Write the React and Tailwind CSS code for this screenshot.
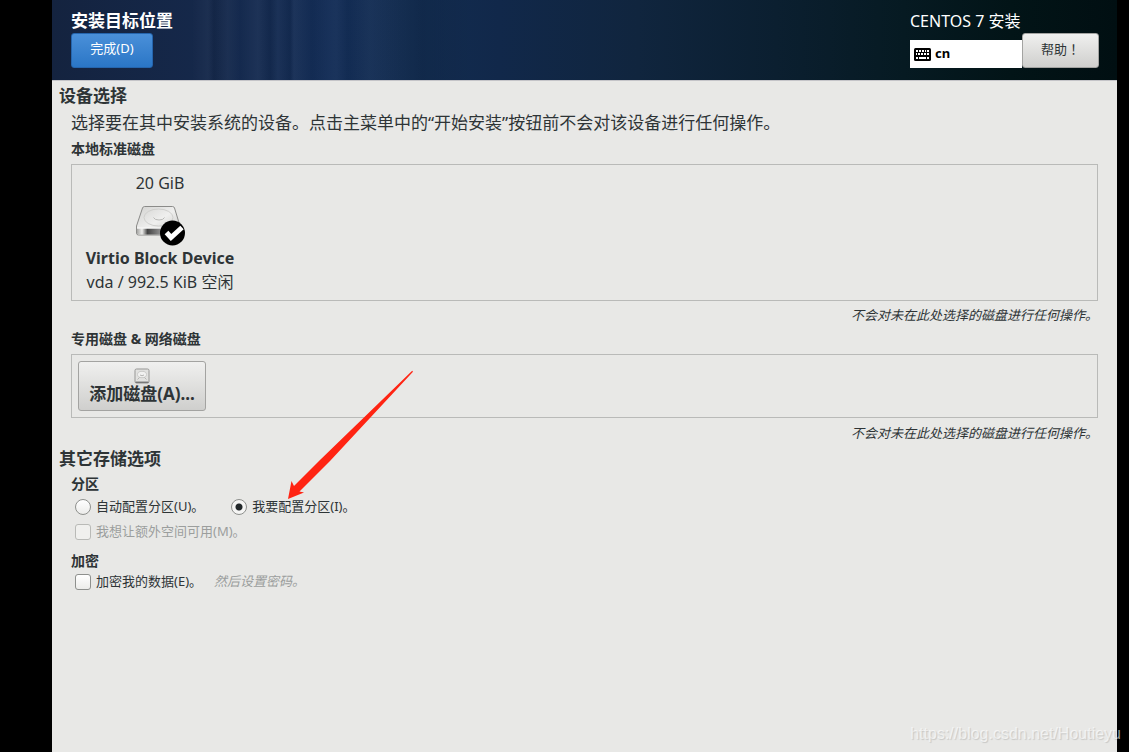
import { useState } from "react";

function KeyboardIcon() {
  return (
    <svg className="w-[17px] h-[13px] shrink-0" viewBox="0 0 17 13" aria-hidden="true">
      <rect x="0" y="0" width="17" height="13" rx="1.5" fill="#000" />
      <g fill="#fff">
        <path d="M2 2h2v2H2zM5 2h2v2H5zM8 2h2v2H8zM11 2h1v2h-1zM13 2h2v2h-2z" />
        <path d="M2 5h1v2H2zM4 5h2v2H4zM7 5h2v2H7zM10 5h2v2h-2zM13 5h2v2h-2z" />
        <path d="M2 9h2v2H2zM5 9h7v2H5zM13 9h2v2h-2z" />
      </g>
    </svg>
  );
}

function DiskIcon() {
  return (
    <svg className="w-[50px] h-[42px]" viewBox="0 0 50 42" aria-hidden="true">
      <defs>
        <linearGradient id="diskTop" x1="0" y1="0" x2="1" y2="1">
          <stop offset="0" stopColor="#d2d2d0" />
          <stop offset="0.5" stopColor="#efefee" />
          <stop offset="1" stopColor="#c4c4c2" />
        </linearGradient>
        <linearGradient id="diskFront" x1="0" y1="0" x2="1" y2="0">
          <stop offset="0" stopColor="#a5a5a3" />
          <stop offset="0.12" stopColor="#eeeeec" />
          <stop offset="0.25" stopColor="#444" />
          <stop offset="0.6" stopColor="#999" />
          <stop offset="1" stopColor="#ddd" />
        </linearGradient>
      </defs>
      <path d="M9.500 2.500h28q1.500 0 2 1.500l5.500 18v7q0 2-2 2h-39.500q-2 0-2-2v-7l6-18q.6-1.500 2-1.500z" fill="url(#diskTop)" stroke="#8b8b89" />
      <path d="M2 24.500h42v4.500q0 1.500-1.500 1.500h-39q-1.500 0-1.500-1.500z" fill="url(#diskFront)" />
      <path d="M2 24h42" stroke="#fafafa" />
      <ellipse cx="23.500" cy="13.500" rx="14.500" ry="8.500" fill="none" stroke="#cfcfcd" />
      <path d="M18.500 13.500q1 2.500 5.500 2.500t5.500-2.500" fill="none" stroke="#b8b8b6" />
      <circle cx="37.500" cy="29" r="12.500" fill="#000" />
      <path d="M31.500 28.500l4.500 5 11-10" fill="none" stroke="#fff" strokeWidth="5" />
    </svg>
  );
}

function SmallDiskIcon() {
  return (
    <svg className="w-4 h-4" viewBox="0 0 16 16" aria-hidden="true">
      <rect x="1" y="1" width="14" height="14" rx="1.500" fill="#e2e2e0" stroke="#979795" />
      <path d="M1.500 14.300h13" stroke="#777" strokeWidth="1.500" />
      <ellipse cx="8" cy="6.500" rx="4.500" ry="3.200" fill="#f1f1f0" stroke="#cacac8" />
      <path d="M6 7q2 1.500 4 0M3.500 11.500l2-2M12.500 11.500l-2-2" stroke="#b5b5b3" fill="none" />
    </svg>
  );
}

function Arrow() {
  return (
    <svg className="absolute left-[286px] top-[370px] w-[130px] h-[131px] pointer-events-none" viewBox="0 0 130 131" aria-hidden="true">
      <path d="M2 129L5.500 111L8 116L34 90L126.200 .8L127 1.800L44 91L13.500 121.500L18 122.500Z" fill="#ff2413" />
    </svg>
  );
}

const radioClass =
  "appearance-none w-4 h-4 shrink-0 rounded-full border border-[#8e908d] bg-linear-to-b from-white to-[#ececea] checked:bg-[radial-gradient(circle,#22282a_3px,#f5f5f4_4px)]";
const checkClass =
  "appearance-none w-4 h-4 shrink-0 rounded-[3px] border border-[#8e908d] bg-linear-to-b from-white to-[#ececea] checked:bg-none checked:bg-[#2e3436] disabled:border-[#b9bab7] disabled:bg-none disabled:bg-[#f0f0ee]";
const greyButton =
  "rounded-[3px] border border-[#a3a3a1] bg-linear-to-b from-[#f0f0ef] to-[#cfcfcd]";

export default function App() {
  const [mode, setMode] = useState("manual");
  const [encrypt, setEncrypt] = useState(false);
  const [selected, setSelected] = useState(true);

  return (
    <div className="relative flex flex-col min-h-screen overflow-hidden bg-black pl-[52px] pr-3 font-['Noto_Sans','Noto_Sans_CJK_SC',sans-serif] text-[#2e3436]">
      {/* Header */}
      <header className="flex h-20 justify-between bg-[linear-gradient(90deg,#ffffff00_140px,#ffffff08_156px,#00000010_162px,#ffffff08_176px,#ffffff00_188px,#ffffff0a_206px,#00000010_218px,#ffffff08_226px,#00000010_238px,#ffffff0a_242px,#00000008_260px,#ffffff08_284px,#00000008_296px,#ffffff08_318px,#00000010_370px,#ffffff00_420px),linear-gradient(90deg,#14233f_0%,#15284a_14%,#132d57_26%,#122c50_34%,#11284a_42%,#10253e_55%,#0b1f30_68%,#061a22_80%,#021417_90%,#010f12_100%)] pl-[19px] pr-[18px] pt-2">
        <div className="flex flex-col items-start">
          <h1 className="pt-px text-[17px] leading-6 font-bold text-white">安装目标位置</h1>
          <button className="h-[35px] w-[82px] rounded-[3px] border border-[#2565ad] bg-linear-to-b from-[#4a90d9] to-[#2a76c6] pb-[3px] text-[13px] text-white">
            完成(D)
          </button>
        </div>
        <div className="flex flex-col">
          <p className="pt-px text-[16px] leading-6 text-white">CENTOS 7 安装</p>
          <div className="flex items-end">
            <div className="flex h-7 w-28 items-center gap-1 bg-white pl-1 text-[13px] font-bold text-black">
              <KeyboardIcon />
              <span>cn</span>
            </div>
            <button className={`h-[35px] w-[77px] pb-[3px] font-['Noto_Sans_CJK_JP',sans-serif] text-[13px] ${greyButton}`}>帮助！</button>
          </div>
        </div>
      </header>

      <main className="flex-1 border-t border-[#c4c4c8] bg-[#e8e8e6] pl-[7px] pr-[19px] pt-[3px]">
        <h2 className="text-[17px] leading-6 font-bold">设备选择</h2>
        <div className="pl-3">
          <p className="mt-[3px] text-[17px] leading-6">
            选择要在其中安装系统的设备。点击主菜单中的“开始安装”按钮前不会对该设备进行任何操作。
          </p>
          <h3 className="mt-1 text-[14px] leading-5 font-bold">本地标准磁盘</h3>
          <div className="mt-[5px] h-[137px] border border-[#b9bab8] pl-3 pt-1.5">
            <button
              className="flex w-[152px] flex-col items-center text-[16px]"
              aria-pressed={selected}
              onClick={() => setSelected(!selected)}
            >
              <span className="leading-6">20 GiB</span>
              <span className="pt-[9px]">
                <DiskIcon />
              </span>
              <span className="leading-6 font-bold whitespace-nowrap">Virtio Block Device</span>
              <span className="leading-6 whitespace-nowrap">vda / 992.5 KiB 空闲</span>
            </button>
          </div>
          <p className="mt-1 text-right text-[13px] leading-5 italic">不会对未在此处选择的磁盘进行任何操作。</p>

          <h3 className="mt-1 text-[14px] leading-5 font-bold">专用磁盘 &amp; 网络磁盘</h3>
          <div className="mt-[5px] h-16 border border-[#b9bab8] p-1.5">
            <button className={`flex h-[50px] w-32 flex-col items-center justify-center text-[17px] leading-5 font-bold ${greyButton}`}>
              <SmallDiskIcon />
              <span>添加磁盘(A)...</span>
            </button>
          </div>
          <p className="mt-[5px] text-right text-[13px] leading-5 italic">不会对未在此处选择的磁盘进行任何操作。</p>
        </div>

        <h2 className="mt-1 text-[17px] leading-6 font-bold">其它存储选项</h2>
        <div className="pl-3 text-[13px]">
          <h3 className="mt-[3px] text-[14px] leading-5 font-bold">分区</h3>
          <div className="mt-[3px] flex h-5 items-center gap-[27px] pl-1">
            <label className="flex items-center gap-[5px]">
              <input type="radio" name="mode" className={radioClass} checked={mode === "auto"} onChange={() => setMode("auto")} />
              自动配置分区(U)。
            </label>
            <label className="flex items-center gap-[5px]">
              <input type="radio" name="mode" className={radioClass} checked={mode === "manual"} onChange={() => setMode("manual")} />
              我要配置分区(I)。
            </label>
          </div>
          <label className="mt-[5px] flex h-5 items-center gap-[5px] pl-1 text-[#9b9e9d]">
            <input type="checkbox" className={checkClass} disabled />
            我想让额外空间可用(M)。
          </label>
          <h3 className="mt-[9px] text-[14px] leading-5 font-bold">加密</h3>
          <div className="mt-px flex h-5 items-center gap-3 pl-1">
            <label className="flex items-center gap-[5px]">
              <input type="checkbox" className={checkClass} checked={encrypt} onChange={(e) => setEncrypt(e.target.checked)} />
              加密我的数据(E)。
            </label>
            <span className="italic text-[#9b9e9d]">然后设置密码。</span>
          </div>
        </div>
      </main>

      {/* arrow pointing at the manual partitioning choice */}
      <Arrow />
      <p className="absolute bottom-2 right-2 font-['Liberation_Sans',sans-serif] text-[16px] leading-5 text-white/60 [text-shadow:1px_1px_1px_#00000024]">
        https://blog.csdn.net/Houtieyu
      </p>
    </div>
  );
}
